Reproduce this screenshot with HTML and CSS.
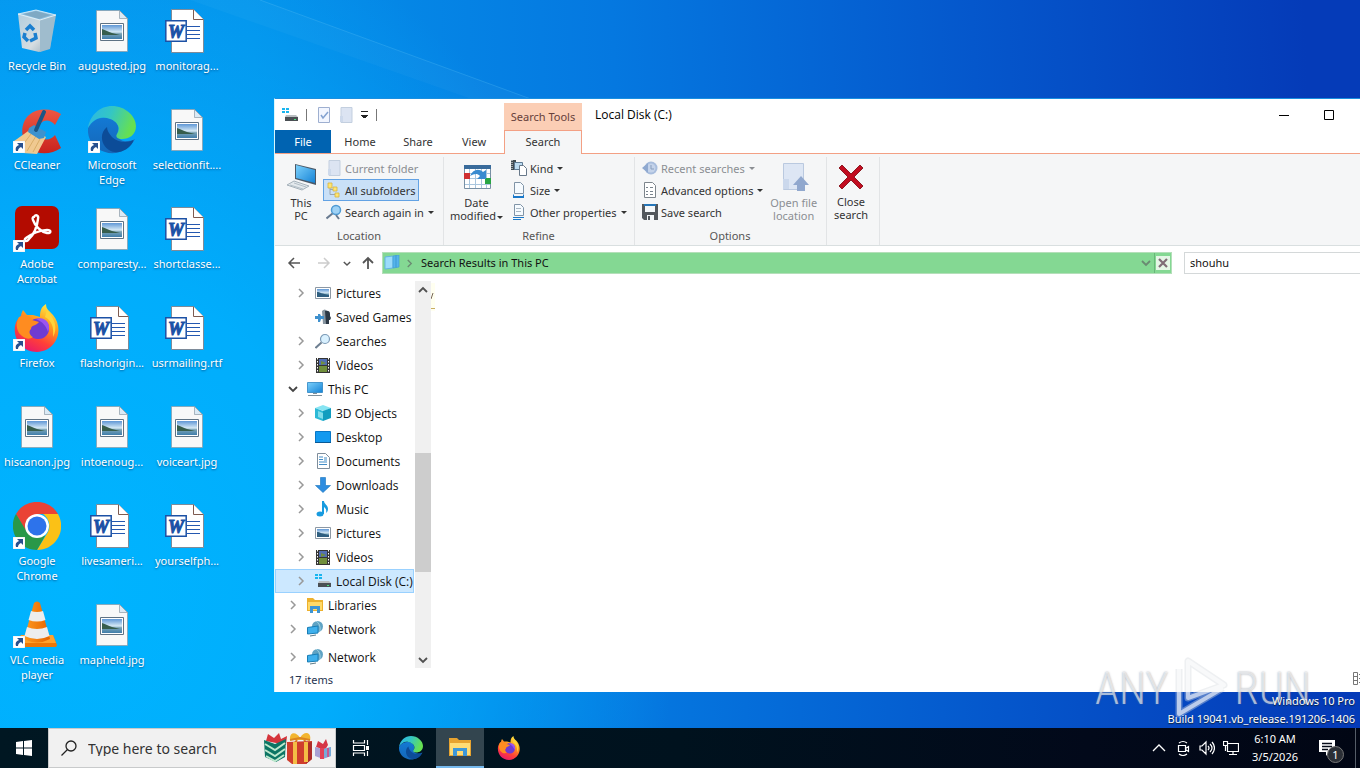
FILE: index.html
```html
<!DOCTYPE html>
<html lang="en">
<head>
<meta charset="utf-8">
<title>Desktop</title>
<link rel="stylesheet" href="styles.css">
</head>
<body>
<svg class="defs" aria-hidden="true">
  <defs>
    <linearGradient id="g-sky" x1="0" y1="0" x2="0" y2="1"><stop offset="0" stop-color="#5f97d6"/><stop offset=".5" stop-color="#d5e9f5"/><stop offset=".62" stop-color="#7aa3b5"/><stop offset="1" stop-color="#3f7dab"/></linearGradient>
    <linearGradient id="g-edge1" x1="0" y1="0" x2="1" y2=".3"><stop offset="0" stop-color="#2bb5e8"/><stop offset=".5" stop-color="#34c6c4"/><stop offset="1" stop-color="#66e052"/></linearGradient>
    <linearGradient id="g-edge2" x1="0" y1="0" x2="0" y2="1"><stop offset="0" stop-color="#1379d4"/><stop offset="1" stop-color="#1567b8"/></linearGradient>
    <linearGradient id="g-fox" x1=".8" y1="0" x2=".3" y2="1"><stop offset="0" stop-color="#fff04a"/><stop offset=".35" stop-color="#ffa01e"/><stop offset=".7" stop-color="#ff4038"/><stop offset="1" stop-color="#e8186c"/></linearGradient>
    <linearGradient id="g-bin" x1="0" y1="0" x2="1" y2="1"><stop offset="0" stop-color="#b3cede"/><stop offset=".6" stop-color="#d6dde1"/><stop offset="1" stop-color="#8fa6b6"/></linearGradient>
    <linearGradient id="g-screen" x1="0" y1="0" x2="1" y2="1"><stop offset="0" stop-color="#7cd0fb"/><stop offset="1" stop-color="#1583d6"/></linearGradient>
    <linearGradient id="g-cone" x1="0" y1="0" x2="1" y2="0"><stop offset="0" stop-color="#ff9a20"/><stop offset="1" stop-color="#e56400"/></linearGradient>
    <linearGradient id="g-cc" x1="0" y1="0" x2="0" y2="1"><stop offset="0" stop-color="#ee5742"/><stop offset="1" stop-color="#c9231d"/></linearGradient>
  </defs>
  <symbol id="shortcut" viewBox="0 0 12 12"><path fill="#fff" stroke="#d0d8e0" stroke-width=".5" d="M0 0h12v12H0z"/><path fill="#27508e" d="M4 2h6v6L8 6C6 7 5 8 5 10H3C2 7 3 5 6 4z"/></symbol>
  <symbol id="bin" viewBox="0 0 48 48"><path fill="url(#g-bin)" d="M5 7 42 8 37 41 26 45 9 41z"/><path fill="#8fc3e4" d="M5 7 23 3 43 8 27 13z"/><path fill="#7fa9c4" d="m10 7 13-3 15 4-12 4z"/><path fill="#9fbccd" d="m27 13 16-5-6 34-10 3z"/><path fill="none" stroke="#eef7fc" stroke-width=".8" d="M5 7 23 3 43 8 27 13z"/><g fill="none" stroke="#1b7fcf" stroke-width="3.500"><path d="m13 23 4-4 4 4"/><path d="m22 26 1 5-6 3"/><path d="m15 34-4-4 1-4"/></g></symbol>
  <symbol id="jpg" viewBox="0 0 48 48"><path fill="#f8f8f8" stroke="#8b9aa5" stroke-width=".7" d="M8.500 3.500h23l8 8v33h-31z"/><path fill="#dbeaf5" stroke="#8b9aa5" stroke-width=".7" d="M31.500 3.500v8h8z"/><path fill="#fff" stroke="#5f7284" d="M12.500 16.500h23v17h-23z"/><path fill="url(#g-sky)" d="M14 18h20v14H14z"/><path fill="#365d4c" d="M14 22c4 1 6 3 10 4l8 2H14z"/></symbol>
  <symbol id="word" viewBox="0 0 48 48"><path fill="#fff" stroke="#7e8b99" d="M8.500 2.500h22l10 10v33h-32z"/><path fill="#fff" stroke="#7e5b50" d="M30.500 2.500v10h10"/><path stroke="#2458b0" d="M24 19.500h13M24 23.500h13M24 27.500h13M24 31.500h13"/><path fill="#fff" stroke="#1c51a5" stroke-width="1.500" d="M2.800 13.800h20.400v20.400H2.800z"/></symbol>
  <symbol id="cc" viewBox="0 0 48 48"><path fill="url(#g-cc)" d="M48 8C38 2 24 2 16 9c-9 8-9 24 0 33 8 7 22 7 32 0l-6-13c-4 5-10 6-14 2-4-4-4-11 0-14 4-4 10-3 14 2z"/><path fill="#f0c990" d="M18 23 4 33l-3 2 9 12 14 1 9-17z"/><path stroke="#d9ad68" fill="none" d="m18 28-9 12m14-10-9 15m13-12-7 13"/><path fill="#3e92cd" d="m16 22 5-3 12 7-2 6-5 1-11-7z"/><path stroke="#1b5685" stroke-width="4" stroke-linecap="round" d="m31 6-8 18"/></symbol>
  <symbol id="edge" viewBox="0 0 48 48"><path fill="url(#g-edge2)" d="M0 22C4 14 12 11 19 12c9 1 13 8 11 13-2 7 3 11 10 10 3 0 5-1 7-2-6 11-19 17-30 13C6 43-1 33 0 22z"/><path fill="#0c4c98" d="M19 21c-8 6-6 18 2 23 8 5 19 1 24-8 1-2 0-2-2-1-6 2-14 1-19-4-3-3-5-7-5-10z"/><path fill="url(#g-edge1)" d="M0 22C2 9 12 0 24 0c13 0 24 10 24 20 0 9-7 13-14 13-4 0-7-2-5-5 5-7-1-14-10-16C12 10 4 14 0 22z"/></symbol>
  <symbol id="acrobat" viewBox="0 0 48 48"><rect x="2" y="1" width="44" height="43" rx="7" fill="#b30b00"/><path fill="none" stroke="#fff" stroke-width="2.400" stroke-linejoin="round" d="M21 12c1-3 5-2 4 2-1 9-5 16-9 20-3 4-6 1-3-1 5-4 14-8 21-8 5 0 4 4 0 3-6-1-12-7-14-13-1-2 0-3 1-3z"/></symbol>
  <symbol id="firefox" viewBox="0 0 48 48"><path fill="url(#g-fox)" d="M8 12c0-2 1-4 2-6l4 5h6l7 2c0-6 1-10 6-13 0 6 4 7 7 11 12 15 3 36-16 37C10 48 0 36 2 22c1-5 3-8 6-10z"/><path fill="#6f3bd2" d="M17 18c6-7 18-3 19 5 1 7-5 13-12 12-8-1-12-10-7-17z"/><path fill="#9b55f0" d="M23 15c9-3 16 5 12 13-2-6-5-10-12-13z"/><path fill="#ff8c20" d="M6 13c8-3 12 0 13 3l7 2c-3 4-8 3-8 7-3 2-1 7 2 8-4 3-9 2-14-4-3-5-3-10 0-16z"/><path fill="#ffd43a" d="M34 6c8 9 11 18 6 27 1-10-1-16-8-20z"/></symbol>
  <symbol id="chrome" viewBox="0 0 48 48"><path fill="#ea4335" d="M3 12C12-4 36-4 45 12H24L13 30z"/><path fill="#fbc116" d="M45 12c9 16-2 36-21 36l11-18c3-6 1-14-5-18z"/><path fill="#299848" d="M3 12c-9 15 2 36 21 36l8-14-18-4z"/><circle cx="24" cy="24" r="12" fill="#fff"/><circle cx="24" cy="24" r="9.500" fill="#2d73eb"/></symbol>
  <symbol id="vlc" viewBox="0 0 48 48"><path fill="#ed7707" d="M8 34h32l4 10-1 2H5l-2-2z"/><path fill="#ffa22d" d="M8 34h32l3 8H5z"/><path fill="url(#g-cone)" d="M21 2q3-3 6 0l10 36q-13 7-26 0z"/><path fill="#ededed" d="m18 10-2.500 9q8.500 3 17 0L30 10q-6 2-12 0zm-4 16-2.500 9q12.500 6 25 0L34 26q-10 4-20 0z"/></symbol>
  <symbol id="drive" viewBox="0 0 16 16"><path fill="#19b5ef" d="M0 1h3v2H0zm4 0h3v2H4zM0 4h3v2H0zm4 0h3v2H4z"/><path fill="#b9bec2" d="m3 10 1-2h10l2 2z"/><path fill="#4a4f54" d="M3 10h13v4H3z"/><path fill="#49e37a" d="M12 12h2v1h-2z"/></symbol>
  <symbol id="picture" viewBox="0 0 16 16"><path fill="#fff" stroke="#8c98a4" d="M.5 2.500h15v11H.5z"/><path fill="url(#g-sky)" d="M2 4h12v8H2z"/><path fill="#2f5f80" d="M2 7c3 0 5 2 12 3v2H2z"/></symbol>
  <symbol id="games" viewBox="0 0 16 16"><path fill="#8795a0" d="M7 2q3-3 5 0v4l2 1v6l-2 2H8z"/><path fill="#2c3946" d="M10 2q5-1 5 3v2l1 2-1 2h-1v4h-3z"/><path fill="#3f91ce" d="M3 5h2l1 2h3v3H6l-1 3H3v-3H0V7h3z"/></symbol>
  <symbol id="search" viewBox="0 0 16 16"><circle cx="10" cy="6" r="4.500" fill="#d9f1ff" stroke="#7d9bb7" stroke-width="1.200"/><path stroke="#6e7f91" stroke-width="2" d="m6.500 9.500-6 5.500"/></symbol>
  <symbol id="search-blue" viewBox="0 0 16 16"><circle cx="10" cy="6" r="4.500" fill="#9fd2f5" stroke="#4f9bd4" stroke-width="1.500"/><path stroke="#687a90" stroke-width="2" d="m6.500 9.500-6 5M10 11l3 4"/></symbol>
  <symbol id="video" viewBox="0 0 16 16"><path fill="#343434" d="M1 1h14v15H1z"/><path fill="#536fb2" d="M4 2h8v6H4z"/><path fill="#718f3c" d="M4 9h8v6H4zM6 4l5 2-5 2z"/><path stroke="#fff" stroke-dasharray="1.500 1.500" d="M2.500 1v15m11-15v15"/></symbol>
  <symbol id="pc" viewBox="0 0 16 16"><path fill="url(#g-screen)" stroke="#2b84c2" stroke-width=".8" d="M.5 1.500h15v10H.5z"/><path stroke="#7f909b" d="M1 14.500h14M6 12.500h4"/></symbol>
  <symbol id="cube" viewBox="0 0 16 16"><path fill="#87e4f2" d="m0 3 8-3 8 3-7 3z"/><path fill="#2cb9d6" d="m0 3 8 3v10l-8-3z"/><path fill="#7fdcea" d="m3 6 5 2v6l-5-2z"/><path fill="#129dbf" d="m8 6 8-3v10l-8 3z"/></symbol>
  <symbol id="desk" viewBox="0 0 16 16"><path fill="#1399ef" stroke="#0877c7" d="M.5 2.500h15v11H.5z"/><path stroke="#095995" d="M0 13.500h16"/></symbol>
  <symbol id="doc" viewBox="0 0 16 16"><path fill="#fff" stroke="#7e8d9b" d="M2.500.5h8l4 4v11h-12z"/><path stroke="#438dc7" stroke-width="1.200" d="M4 4h4M4 6.500h4M4 9h8M4 11.500h8M9 5h3M9 7h3"/></symbol>
  <symbol id="down" viewBox="0 0 16 16"><path fill="#2e8de0" stroke="#1573bc" stroke-width=".6" d="M5.500.5h5v8h5L8 15.500.5 8.500h5z"/></symbol>
  <symbol id="music" viewBox="0 0 16 16"><ellipse cx="5" cy="13" rx="3.500" ry="2.500" fill="#189bdf"/><path fill="#189bdf" d="M7 0h2c0 3 4 4 4 8 0 2-1 3-2 4 1-4-1-5-2-6v7H7z"/></symbol>
  <symbol id="library" viewBox="0 0 16 16"><path fill="#edb12d" d="M0 1h6l2 2h8v11H0z"/><path fill="#ffd968" d="M1 5h14v8H1z"/><path fill="#3d95d4" d="M3 9h10v7h-3v-4H6v4H3z"/></symbol>
  <symbol id="network" viewBox="0 0 16 16"><circle cx="10.500" cy="5.500" r="5.500" fill="#5fa3c4"/><path fill="none" stroke="#b8e1e9" stroke-width=".7" d="M9 0q5 3 4 10"/><path fill="#3fb0ec" stroke="#187db5" d="M.5 6.500 11 5v7L.5 13z"/><path stroke="#5d7b89" d="m3 15 6-1"/></symbol>
  <symbol id="folder-dim" viewBox="0 0 16 16"><path fill="#dce4f2" stroke="#c3cfdf" d="M3 .5h11v15H3z"/><path fill="#cdd9eb" d="M2 9h3v6H2z"/></symbol>
  <symbol id="check-doc" viewBox="0 0 16 16"><path fill="#f2f6ff" stroke="#9eafd0" d="M2.500.5h11v15h-11z"/><path fill="none" stroke="#83a2d1" stroke-width="1.500" d="m5 8 2 3 5-6"/></symbol>
  <symbol id="subs" viewBox="0 0 16 16"><path fill="none" stroke="#9aa6b2" d="M4 6v6.500h5M4 7.500h4"/><path fill="#ffe56f" stroke="#d5b441" stroke-width=".8" d="M2 1h4v5H2zm5 4h4v4H7zm2 6h4v4H9z"/></symbol>
  <symbol id="kind" viewBox="0 0 16 16"><path fill="#3f4a52" d="M0 0h5v10H0z"/><path stroke="#fff" stroke-dasharray="1 1" d="M1 0v10"/><path fill="#bddcf2" stroke="#5e7b94" d="M3.500 2.500h8v7h-8z"/><path fill="#fff" stroke="#68798a" d="M8.500 5.500h4l3 3v7h-7z"/></symbol>
  <symbol id="size" viewBox="0 0 16 16"><path fill="#f6fbff" stroke="#8094a7" d="M3.500.5h6l3 3v8h-9z"/><path fill="none" stroke="#1978c9" d="M2.500 12.500v2h10v-2"/><path stroke="#1978c9" stroke-width="2" d="M2 15h11"/></symbol>
  <symbol id="props" viewBox="0 0 16 16"><path fill="#f6fbff" stroke="#8094a7" d="M3.500.5h6l3 3v8h-9z"/><path stroke="#a9b7c3" d="M5 4.500h5m-5 3h5"/><path stroke="#1978c9" d="M2 13.500h11m-11 2h8"/></symbol>
  <symbol id="recent" viewBox="0 0 16 16"><circle cx="9" cy="8" r="6.500" fill="#a8bddd"/><circle cx="9" cy="8" r="4.500" fill="#c4d3ea"/><path fill="none" stroke="#879dbd" d="M9 5v4h3"/><path fill="#8fa9d0" d="m0 8 6-5v10z"/></symbol>
  <symbol id="advanced" viewBox="0 0 16 16"><path fill="#fff" stroke="#7d858c" d="M2.500.5h8l3 3v12h-11z"/><path stroke="#79848e" d="M4 5.500h2m2 0h3m-7 4h2m2 0h3m-7 3h2m2 0h3"/></symbol>
  <symbol id="save" viewBox="0 0 16 16"><path fill="#53585d" d="M0 0h16v16H2l-2-2z"/><path fill="#2676b8" d="M2 0h12v2H2z"/><path fill="#f4f7f9" d="M3 2h10v6H3zm2 9h7v5H5z"/><path fill="#53585d" d="M6 12h2v4H6z"/></symbol>
  <symbol id="pc-big" viewBox="0 0 32 32"><path fill="#4b5968" d="m10 4 21 5v16l-21-6z"/><path fill="url(#g-screen)" d="m11 5 19 5v13l-19-5z"/><path fill="#e3e9ed" stroke="#a5b1ba" d="m2 25 7-4 15 5-7 4z"/><path stroke="#b3bfc7" d="m5 25 13 4m-9-6 12 4"/></symbol>
  <symbol id="calendar" viewBox="0 0 32 32"><path fill="#fff" stroke="#7890a5" d="M3.500 5.500h26v23h-26z"/><path fill="#396b9b" d="M3 5h27v4H3z"/><path stroke="#a9c6de" d="M4 13.500h25m-25 5h25m-25 6h25M8.500 9v19m6-19v19m6-19v19m5-19v19"/><path fill="#cf2f31" d="M3 13h6v6H3z"/><path fill="#28a543" d="M24 18h6v6h-6z"/><path fill="#398bd0" d="M9 16c3-7 9-8 13-4l3-2v9h-9l3-3c-3-3-6-2-10 0z"/></symbol>
  <symbol id="open-big" viewBox="0 0 32 32"><path fill="#dde6f4" stroke="#bac9df" d="M5.500 3.500h20v26h-20z"/><path fill="#cbd8ec" d="M5 19h6v10H5z"/><path fill="#91a8ce" d="m23 16 8 9h-4v6h-8v-6h-4z"/></symbol>
  <symbol id="close-big" viewBox="0 0 32 32"><path fill="#c20c20" stroke="#8e1a23" d="m4 9 3-3 9 9 9-9 3 3-9 9 9 9-3 3-9-9-9 9-3-3 9-9z"/></symbol>
  <symbol id="chev-r" viewBox="0 0 8 10"><path fill="none" stroke="currentColor" stroke-width="1.500" d="m2 1 4 4-4 4"/></symbol>
  <symbol id="chev-d" viewBox="0 0 10 8"><path fill="none" stroke="currentColor" stroke-width="1.800" d="m1 2 4 4 4-4"/></symbol>
  <symbol id="chev-u" viewBox="0 0 10 8"><path fill="none" stroke="currentColor" stroke-width="1.800" d="m1 6 4-4 4 4"/></symbol>
  <symbol id="left" viewBox="0 0 14 14"><path fill="none" stroke="currentColor" stroke-width="1.500" d="M13 7H2m5-5L2 7l5 5"/></symbol>
  <symbol id="right" viewBox="0 0 14 14"><path fill="none" stroke="currentColor" stroke-width="1.500" d="M1 7h11M7 2l5 5-5 5"/></symbol>
  <symbol id="up" viewBox="0 0 14 14"><path fill="none" stroke="currentColor" stroke-width="1.800" d="M7 13V2M2 7l5-5 5 5"/></symbol>
</svg>

<main class="desktop">
  <svg class="rays" viewBox="0 0 1360 728" preserveAspectRatio="none" aria-hidden="true"><path d="M190 0h70l300 110v20z" fill="#fff" opacity=".03"/><path d="m260 0 290 106" stroke="#5cc0f5" opacity=".3"/></svg>
  <nav class="shortcuts" aria-label="Desktop">
    <button class="shortcut"><svg><use href="#bin"/></svg><span>Recycle Bin</span></button>
    <button class="shortcut linked"><svg><use href="#cc"/></svg><svg class="arrow"><use href="#shortcut"/></svg><span>CCleaner</span></button>
    <button class="shortcut linked"><svg><use href="#acrobat"/></svg><svg class="arrow"><use href="#shortcut"/></svg><span>Adobe<br>Acrobat</span></button>
    <button class="shortcut linked"><svg><use href="#firefox"/></svg><svg class="arrow"><use href="#shortcut"/></svg><span>Firefox</span></button>
    <button class="shortcut"><svg><use href="#jpg"/></svg><span>hiscanon.jpg</span></button>
    <button class="shortcut linked"><svg><use href="#chrome"/></svg><svg class="arrow"><use href="#shortcut"/></svg><span>Google<br>Chrome</span></button>
    <button class="shortcut linked"><svg><use href="#vlc"/></svg><svg class="arrow"><use href="#shortcut"/></svg><span>VLC media<br>player</span></button>
    <button class="shortcut"><svg><use href="#jpg"/></svg><span>augusted.jpg</span></button>
    <button class="shortcut linked"><svg><use href="#edge"/></svg><svg class="arrow"><use href="#shortcut"/></svg><span>Microsoft<br>Edge</span></button>
    <button class="shortcut"><svg><use href="#jpg"/></svg><span>comparesty...</span></button>
    <button class="shortcut"><svg><use href="#word"/><text x="13" y="31" class="wordmark" text-anchor="middle">W</text></svg><span>flashorigin...</span></button>
    <button class="shortcut"><svg><use href="#jpg"/></svg><span>intoenoug...</span></button>
    <button class="shortcut"><svg><use href="#word"/><text x="13" y="31" class="wordmark" text-anchor="middle">W</text></svg><span>livesameri...</span></button>
    <button class="shortcut"><svg><use href="#jpg"/></svg><span>mapheld.jpg</span></button>
    <button class="shortcut"><svg><use href="#word"/><text x="13" y="31" class="wordmark" text-anchor="middle">W</text></svg><span>monitorag...</span></button>
    <button class="shortcut"><svg><use href="#jpg"/></svg><span>selectionfit....</span></button>
    <button class="shortcut"><svg><use href="#word"/><text x="13" y="31" class="wordmark" text-anchor="middle">W</text></svg><span>shortclasse...</span></button>
    <button class="shortcut"><svg><use href="#word"/><text x="13" y="31" class="wordmark" text-anchor="middle">W</text></svg><span>usrmailing.rtf</span></button>
    <button class="shortcut"><svg><use href="#jpg"/></svg><span>voiceart.jpg</span></button>
    <button class="shortcut"><svg><use href="#word"/><text x="13" y="31" class="wordmark" text-anchor="middle">W</text></svg><span>yourselfph...</span></button>
  </nav>

  <section class="window" aria-label="Local Disk (C:)">
    <header class="titlebar">
      <div class="quick">
        <svg class="i16"><use href="#drive"/></svg><i class="bar"></i>
        <button aria-label="Properties"><svg class="i16"><use href="#check-doc"/></svg></button>
        <button aria-label="New folder"><svg class="i16"><use href="#folder-dim"/></svg></button>
        <button class="customize" aria-label="Customize"></button><i class="bar"></i>
      </div>
      <div class="context">Search Tools</div>
      <h1>Local Disk (C:)</h1>
      <div class="controls">
        <button aria-label="Minimize"><svg viewBox="0 0 10 10"><path stroke="#000" d="M0 5.500h10"/></svg></button>
        <button aria-label="Maximize"><svg viewBox="0 0 10 10"><path fill="none" stroke="#000" d="M.5.5h9v9h-9z"/></svg></button>
      </div>
    </header>
    <div class="tabs" role="tablist">
      <button class="tab file" role="tab">File</button>
      <button class="tab" role="tab">Home</button>
      <button class="tab" role="tab">Share</button>
      <button class="tab" role="tab">View</button>
      <button class="tab current" role="tab" aria-selected="true">Search</button>
    </div>
    <div class="ribbon">
      <section class="group location">
        <div class="tools">
          <button class="big"><svg><use href="#pc-big"/></svg>This<br>PC</button>
          <div class="stack">
            <button class="small dim"><svg class="i16"><use href="#folder-dim"/></svg>Current folder</button>
            <button class="small on"><svg class="i16"><use href="#subs"/></svg>All subfolders</button>
            <button class="small"><svg class="i16"><use href="#search-blue"/></svg>Search again in<i class="caret"></i></button>
          </div>
        </div>
        <h2>Location</h2>
      </section>
      <section class="group refine">
        <div class="tools">
          <button class="big"><svg><use href="#calendar"/></svg>Date<br>modified<i class="caret"></i></button>
          <div class="stack">
            <button class="small"><svg class="i16"><use href="#kind"/></svg>Kind<i class="caret"></i></button>
            <button class="small"><svg class="i16"><use href="#size"/></svg>Size<i class="caret"></i></button>
            <button class="small"><svg class="i16"><use href="#props"/></svg>Other properties<i class="caret"></i></button>
          </div>
        </div>
        <h2>Refine</h2>
      </section>
      <section class="group options">
        <div class="tools">
          <div class="stack">
            <button class="small dim"><svg class="i16"><use href="#recent"/></svg>Recent searches<i class="caret"></i></button>
            <button class="small"><svg class="i16"><use href="#advanced"/></svg>Advanced options<i class="caret"></i></button>
            <button class="small"><svg class="i16"><use href="#save"/></svg>Save search</button>
          </div>
          <button class="big dim"><svg><use href="#open-big"/></svg>Open file<br>location</button>
        </div>
        <h2>Options</h2>
      </section>
      <section class="group closing">
        <div class="tools"><button class="big"><svg><use href="#close-big"/></svg>Close<br>search</button></div>
      </section>
    </div>
    <div class="navbar">
      <button class="nav" aria-label="Back"><svg><use href="#left"/></svg></button>
      <button class="nav off" aria-label="Forward"><svg><use href="#right"/></svg></button>
      <button class="nav recent" aria-label="Recent locations"><svg><use href="#chev-d"/></svg></button>
      <button class="nav" aria-label="Up"><svg><use href="#up"/></svg></button>
      <div class="address">
        <svg class="i16" viewBox="0 0 16 16"><path fill="#9bdcfa" stroke="#62b4e2" d="m1 2 8-1v12l-8 1z"/><path fill="#55b4ec" stroke="#3f9dd6" stroke-width=".7" d="m9 1 3-.500v12L9 13zm3-.500L15 0v12l-3 .500z"/></svg>
        <svg class="crumb"><use href="#chev-r"/></svg>
        <span>Search Results in This PC</span>
        <button class="drop" aria-label="Previous locations"><svg><use href="#chev-d"/></svg></button>
        <button class="stop" aria-label="Stop search"><svg viewBox="0 0 16 16"><path fill="#e5f6e6" d="M1 1h14v14H1z"/><path stroke="#806b76" stroke-width="2.200" d="m4 4 8 8m0-8-8 8"/></svg></button>
      </div>
      <input class="query" type="text" aria-label="Search" value="shouhu">
    </div>
    <div class="content">
      <ul class="tree">
        <li class="sub"><svg class="exp"><use href="#chev-r"/></svg><svg class="i16"><use href="#picture"/></svg>Pictures</li>
        <li class="sub"><svg class="exp"></svg><svg class="i16"><use href="#games"/></svg>Saved Games</li>
        <li class="sub"><svg class="exp"><use href="#chev-r"/></svg><svg class="i16"><use href="#search"/></svg>Searches</li>
        <li class="sub"><svg class="exp"><use href="#chev-r"/></svg><svg class="i16"><use href="#video"/></svg>Videos</li>
        <li><svg class="exp open"><use href="#chev-d"/></svg><svg class="i16"><use href="#pc"/></svg>This PC</li>
        <li class="sub"><svg class="exp"><use href="#chev-r"/></svg><svg class="i16"><use href="#cube"/></svg>3D Objects</li>
        <li class="sub"><svg class="exp"><use href="#chev-r"/></svg><svg class="i16"><use href="#desk"/></svg>Desktop</li>
        <li class="sub"><svg class="exp"><use href="#chev-r"/></svg><svg class="i16"><use href="#doc"/></svg>Documents</li>
        <li class="sub"><svg class="exp"><use href="#chev-r"/></svg><svg class="i16"><use href="#down"/></svg>Downloads</li>
        <li class="sub"><svg class="exp"><use href="#chev-r"/></svg><svg class="i16"><use href="#music"/></svg>Music</li>
        <li class="sub"><svg class="exp"><use href="#chev-r"/></svg><svg class="i16"><use href="#picture"/></svg>Pictures</li>
        <li class="sub"><svg class="exp"><use href="#chev-r"/></svg><svg class="i16"><use href="#video"/></svg>Videos</li>
        <li class="sub selected"><svg class="exp"><use href="#chev-r"/></svg><svg class="i16"><use href="#drive"/></svg>Local Disk (C:)</li>
        <li><svg class="exp"><use href="#chev-r"/></svg><svg class="i16"><use href="#library"/></svg>Libraries</li>
        <li><svg class="exp"><use href="#chev-r"/></svg><svg class="i16"><use href="#network"/></svg>Network</li>
        <li class="last"><svg class="exp"><use href="#chev-r"/></svg><svg class="i16"><use href="#network"/></svg>Network</li>
      </ul>
      <div class="scroll" aria-hidden="true">
        <svg><use href="#chev-u"/></svg><div class="track"><div class="thumb"></div></div><svg><use href="#chev-d"/></svg>
      </div>
      <div class="results"><svg class="tip" viewBox="0 0 4 28" aria-hidden="true"><path fill="#fffff0" d="M0 0h4v28H0z"/><path stroke="#765" d="m0 16 2-6"/><path stroke="#c9ad62" d="M0 25.500h4"/></svg></div>
    </div>
    <footer class="status"><span>17 items</span><svg viewBox="0 0 7 14" aria-hidden="true"><path fill="none" stroke="#777" d="M.5.5h4v12h-4zM0 4.500h5m-5 4h5M6 2.500h1m-1 4h1m-1 4h1"/></svg></footer>
  </section>

  <div class="watermark"><span>ANY</span><svg viewBox="0 0 56 66" aria-hidden="true"><path fill="none" stroke="#d5d9df" stroke-width="7" stroke-linejoin="round" d="M14 5v37l36-13zM5 13v45l44-26" opacity=".4"/><path fill="none" stroke="#fff" stroke-width="4" stroke-linejoin="round" d="M14 5v37l36-13zM5 13v45l44-26" opacity=".6"/></svg><span>RUN</span></div>
  <p class="build">Windows 10 Pro<br>Build 19041.vb_release.191206-1406</p>
</main>

<footer class="taskbar">
  <button class="start" aria-label="Start"><svg viewBox="0 0 16 16"><path fill="#fff" d="M0 2l7-1v6.500H0zM8 1l8-1v7.500H8zM0 8.500h7V15l-7-1zm8 0h8V16l-8-1z"/></svg></button>
  <label class="find"><svg viewBox="0 0 16 16"><circle cx="10" cy="6" r="5" fill="none" stroke="#222" stroke-width="1.300"/><path stroke="#222" stroke-width="1.300" d="m6.500 9.500-6 6"/></svg><input type="text" placeholder="Type here to search">
    <svg class="gifts" viewBox="0 0 70 34"><path fill="#d5353c" d="m2 10 2-7 6 4 5-5 2 6 6-3-1 9z"/><path fill="#0c7564" d="m0 9 11 4 11-5-1 18-9 5-11-5z"/><path fill="none" stroke="#bce8cd" stroke-width="2" d="m1 13 10 6 10-7M1 19l10 6 10-7M2 25l9 5 9-6"/><path fill="#f3b52f" d="M26 9c-1-8 6-9 10-2 4-8 12-6 10 2z"/><path fill="none" stroke="#dc8420" stroke-width="2" d="m26 9 10-2 10 2M33 9l-4 5m11-5 4 5"/><path fill="#cf3d2d" d="m23 11 25-1v18l-6 5H28l-5-4z"/><path fill="#ad2c2a" d="m42 12 6-1v17l-6 5z"/><path fill="#f4bd45" d="M29 11h4v22h-4zm11 0h4v20h-4z"/><path fill="#d63647" d="m52 16 2-6 5 3 3-5 2 6-3 5z"/><path fill="#a8a0d4" d="m51 16 8 2 8-2v9l-8 3-8-3z"/><path fill="#e24259" d="M56 17h4v11h-4z"/><path fill="#76abd9" d="M60 18l7-2v9l-7 2z"/><path fill="#c65a92" d="M63 17h2v9h-2z"/></svg>
  </label>
  <button class="task" aria-label="Task View"><svg class="i18" viewBox="0 0 18 18"><path fill="none" stroke="#fff" stroke-width="1.200" d="M1.500 1v3h11V1m-11 16v-3h11v3M1.500 6.500h11v5h-11zM15.500 1v5m0 6v5"/><path fill="#fff" d="M14 7h3v4h-3z"/></svg></button>
  <button class="task" aria-label="Microsoft Edge"><svg class="i24"><use href="#edge"/></svg></button>
  <button class="task active" aria-label="File Explorer"><svg class="i24" viewBox="0 0 24 24"><path fill="#e6a330" d="M1 3h8l2 2h12v16H1z"/><path fill="#ffdc75" d="M2 8h20v12H2z"/><path fill="#3e98d7" d="M5 13h14v8h-4v-5H9v5H5z"/></svg></button>
  <button class="task" aria-label="Firefox"><svg class="i24"><use href="#firefox"/></svg></button>
  <div class="tray">
    <button aria-label="Show hidden icons"><svg viewBox="0 0 16 16"><path fill="none" stroke="#fff" stroke-width="1.300" d="m2 11 6-6 6 6"/></svg></button>
    <button aria-label="Meet Now"><svg viewBox="0 0 16 16"><path fill="none" stroke="#fff" stroke-width="1.200" d="M3.500 5.500h7v6h-7zm7 3 3-2v5l-3-2M4 3q4-3 8 0M4 14q4 3 8 0"/></svg></button>
    <button aria-label="Volume"><svg viewBox="0 0 16 16"><path fill="none" stroke="#fff" stroke-width="1.200" d="M1 6h2l4-4v12l-4-4H1zM9 6q2 2 0 4m2-6q4 4 0 8m2-10q5 6 0 12"/></svg></button>
    <button aria-label="Network"><svg viewBox="0 0 16 16"><path fill="none" stroke="#fff" stroke-width="1.200" d="M4 3.500h11.500v8H4.500V3M10 12v3M6 14.500h8M.5 1.500h4v4h-4zM2.500 6v5"/></svg></button>
    <div class="clock">6:10 AM<br>3/5/2026</div>
    <button class="notice" aria-label="1 notification"><svg viewBox="0 0 18 18"><path fill="#fff" d="M1 1h16v12h-6l-3 4v-4H1z"/><path stroke="#050b18" stroke-width="1.300" d="M4 4.500h10M4 7.500h10M4 10.500h6"/></svg><b>1</b></button>
    <button class="peek" aria-label="Show desktop"></button>
  </div>
</footer>
</body>
</html>
```
FILE: styles.css
```css
* { box-sizing: border-box; }
html, body { height: 100%; }
body {
  margin: 0;
  display: flex;
  flex-direction: column;
  overflow: hidden;
  font: 11px/15px "Noto Sans", "Open Sans", sans-serif;
  color: #111;
  background: #00aaff;
}
button, input { font: inherit; color: inherit; border: 0; padding: 0; background: none; }
ul, h1, h2, p { margin: 0; padding: 0; font: inherit; list-style: none; }
svg { display: block; flex: none; }
.defs { position: absolute; width: 0; height: 0; }
.i16 { width: 16px; height: 16px; }
.i18 { width: 18px; height: 18px; }
.i24 { width: 24px; height: 24px; }

/* Desktop */
.desktop {
  position: relative;
  flex: 1;
  min-height: 0;
  background:
    radial-gradient(ellipse 45% 95% at 5% 80%, #00b4ff 0%, rgba(0, 178, 255, .85) 45%, rgba(0, 170, 255, 0) 100%),
    linear-gradient(88deg, #0692ec 0%, #0591ea 20%, #0578e0 46%, #0557cc 72%, #053bb8 96%);
}
.rays { position: absolute; inset: 0; width: 100%; height: 100%; }
.shortcuts {
  position: relative;
  display: grid;
  grid-auto-flow: column;
  grid-template-rows: repeat(7, 99px);
  grid-auto-columns: 74px;
  column-gap: 1px;
  justify-content: start;
}
.shortcut {
  position: relative;
  display: flex;
  flex-direction: column;
  align-items: center;
  gap: 3px;
  padding-top: 7px;
  color: #fff;
  white-space: nowrap;
  text-shadow: 0 1px 2px rgba(0, 40, 90, .6);
}
.shortcut svg { width: 48px; height: 48px; }
.shortcut .arrow { position: absolute; left: 13px; top: 42px; width: 12px; height: 12px; }
.wordmark { font: italic bold 18px "Liberation Serif", serif; fill: #1c51a5; stroke: #1c51a5; stroke-width: 1px; text-shadow: none; }

/* Explorer window */
.window {
  position: absolute;
  left: 274px;
  right: 0;
  top: 98px;
  bottom: 36px;
  display: flex;
  flex-direction: column;
  background: #fff;
  border: solid #1a8fe0;
  border-width: 1px 0 0 1px;
  border-left-color: #d9f6fb;
}
.titlebar { display: flex; height: 31px; align-items: flex-end; }
.quick { width: 229px; height: 31px; display: flex; align-items: center; padding-left: 7px; }
.bar { width: 1px; height: 12px; margin: 0 9px 0 8px; background: #777; }
.quick button { width: 16px; height: 16px; margin-right: 6px; }
.quick .customize { width: 7px; height: 8px; margin: 0 0 0 1px; border-top: 1px solid #222; background: linear-gradient(#222, #222) center 3px / 7px 1px no-repeat, linear-gradient(#222, #222) center 4px / 5px 1px no-repeat, linear-gradient(#222, #222) center 5px / 3px 1px no-repeat; }
.context { width: 78px; height: 27px; line-height: 27px; text-align: center; background: #fbceb5; color: #66403a; }
.titlebar h1 { align-self: center; flex: 1; padding-left: 13px; font: 12px/15px "Open Sans", sans-serif; color: #000; }
.controls { align-self: center; display: flex; gap: 35px; padding-right: 26px; }
.controls button, .controls svg { width: 10px; height: 10px; }
.tabs { display: flex; height: 24px; border-bottom: 1px solid #f3a084; color: #333; }
.tab { width: 58px; height: 23px; }
.tab.file { width: 56px; background: #0063b1; color: #fff; }
.tab:nth-child(4) { width: 54px; }
.tab.current { width: 78px; height: 24px; margin-left: 3px; border: solid #f3a084; border-width: 1px 1px 0; background: #f5f6f7; padding-bottom: 2px; }
.ribbon { display: flex; height: 92px; background: #f5f6f7; border-bottom: 1px solid #d9dfe0; color: #333; }
.group { display: flex; flex-direction: column; justify-content: space-between; margin-top: 3px; border-right: 1px solid #e2e4e6; padding: 0 4px 2px; }
.location { width: 169px; }
.refine { width: 191px; padding-left: 3px; }
.options { width: 192px; padding: 0 5px 2px 4px; }
.closing { width: 53px; padding-left: 2px; }
.tools { display: flex; }
.group h2 { text-align: center; color: #555; }
.big { width: 44px; line-height: 13px; padding-top: 2px; text-align: center; white-space: nowrap; }
.big svg { width: 32px; height: 32px; margin: 0 auto 4px; }
.refine .big { width: 59px; }
.options .big { width: 56px; margin-left: auto; }
.stack { display: flex; flex-direction: column; align-items: flex-start; }
.refine .stack { padding-left: 2px; }
.small { display: flex; align-items: center; gap: 3px; height: 22px; padding: 0 3px; white-space: nowrap; }
.small.on { border: 1px solid #62a2e4; background: #c9e0f7; padding: 0 3px 0 2px; }
.dim { color: #8b8e93; }
.caret { display: inline-block; border: solid transparent; border-width: 3px 3px 0; border-top-color: currentColor; margin-left: 1px; vertical-align: middle; }
.navbar { display: flex; align-items: center; height: 34px; padding-left: 9px; color: #555; }
.nav { display: flex; justify-content: center; width: 20px; margin-right: 10px; }
.nav svg { width: 14px; height: 14px; }
.nav.off { color: #ccc; margin-right: 4px; }
.nav.recent { width: 18px; margin-right: 2px; }
.nav.recent svg { width: 8px; height: 7px; }
.nav.recent + .nav { margin-right: 4px; }
.address { flex: 1; display: flex; align-items: center; height: 22px; padding-left: 1px; background: #84d893; border: 1px solid #b4dfb9; color: #6a8a72; }
.address span { flex: 1; padding-bottom: 2px; color: #111; }
.crumb { width: 7px; height: 9px; margin: 0 8px 0 6px; }
.drop { width: 17px; height: 20px; border-right: 1px solid #68b778; }
.drop svg { width: 10px; height: 8px; margin: auto; }
.stop, .stop svg { width: 16px; height: 16px; }
.query { width: 176px; height: 22px; margin-left: 12px; padding: 0 5px 2px; border: solid #d4d8d9; border-width: 1px 0 1px 1px; color: #111; }
.content { flex: 1; min-height: 0; display: flex; padding-top: 1px; }
.tree { width: 140px; overflow: hidden; font: 12px/15px "Open Sans", sans-serif; color: #111; }
.tree li { display: flex; align-items: center; height: 24px; padding-left: 14px; margin-right: 1px; white-space: nowrap; }
.tree .sub { padding-left: 22px; }
.tree .i16 { margin-right: 5px; }
.tree .selected { background: #cce8ff; border: 1px solid #99d1ff; padding-left: 21px; }
.tree .last { margin-top: 4px; }
.exp { width: 8px; height: 10px; margin-right: 10px; color: #999; }
.exp.open { width: 10px; height: 8px; margin: 0 9px 0 -1px; color: #444; }
.scroll { width: 16px; display: flex; flex-direction: column; align-items: center; background: #f0f0f0; color: #505050; }
.scroll svg { width: 10px; height: 8px; margin: 5px 0 4px; }
.track { flex: 1; width: 100%; display: grid; grid-template-rows: 155fr 119fr 79fr; }
.thumb { grid-row: 2; background: #cdcdcd; }
.results { flex: 1; }
.tip { width: 4px; height: 28px; margin-top: 2px; }
.status { display: flex; align-items: center; justify-content: space-between; height: 24px; padding: 0 0 2px 14px; color: #26344f; }
.status svg { width: 7px; height: 14px; }

/* Overlays at the desktop corner */
.watermark { position: absolute; right: 49px; bottom: 6px; display: flex; align-items: center; gap: 5px; font: 300 48px/60px "Roboto Condensed", "Open Sans Condensed", sans-serif; font-size: 44px; color: rgba(255, 255, 255, .6); text-shadow: 0 0 2px rgba(100, 110, 125, .6); pointer-events: none; }
.watermark svg { width: 56px; height: 66px; }
.build { position: absolute; right: 5px; bottom: 0; line-height: 18px; text-align: right; color: #fff; text-shadow: 0 1px 1px #123; }

/* Taskbar */
.taskbar { display: flex; height: 40px; background: linear-gradient(90deg, #001722, #00121e 50%, #02091a 80%, #010614); color: #fff; }
.start { width: 48px; display: grid; place-items: center; }
.start svg { width: 16px; height: 16px; }
.task { width: 50px; display: grid; place-items: center; }
.task.active { width: 48px; background: #33454f; border-bottom: 2px solid #76b9ed; }
.find { width: 288px; display: flex; align-items: center; background: #f1f1f1; border: 1px solid #c8cacb; padding-left: 12px; color: #333; }
.find > svg:first-child { width: 16px; height: 16px; }
.find input { flex: 1; min-width: 0; margin-left: 11px; font-size: 14px; }
.find input::placeholder { color: #333; opacity: 1; }
.find .gifts { width: 70px; height: 34px; margin-right: 1px; }
.tray { margin-left: auto; display: flex; align-items: center; }
.tray button { width: 24px; display: grid; place-items: center; }
.tray svg { width: 16px; height: 16px; }
.clock { width: 64px; text-align: center; line-height: 18px; }
.tray .notice { position: relative; width: 48px; height: 40px; }
.tray .notice svg { width: 18px; height: 18px; margin-right: 8px; }
.notice b { position: absolute; left: 20px; top: 18px; width: 17px; height: 17px; border: 1px solid #777; border-radius: 50%; background: #2b2f36; font: 11px/15px "Noto Sans", sans-serif; }
.tray .peek { width: 5px; height: 40px; border-left: 1px solid #555d68; }
```
